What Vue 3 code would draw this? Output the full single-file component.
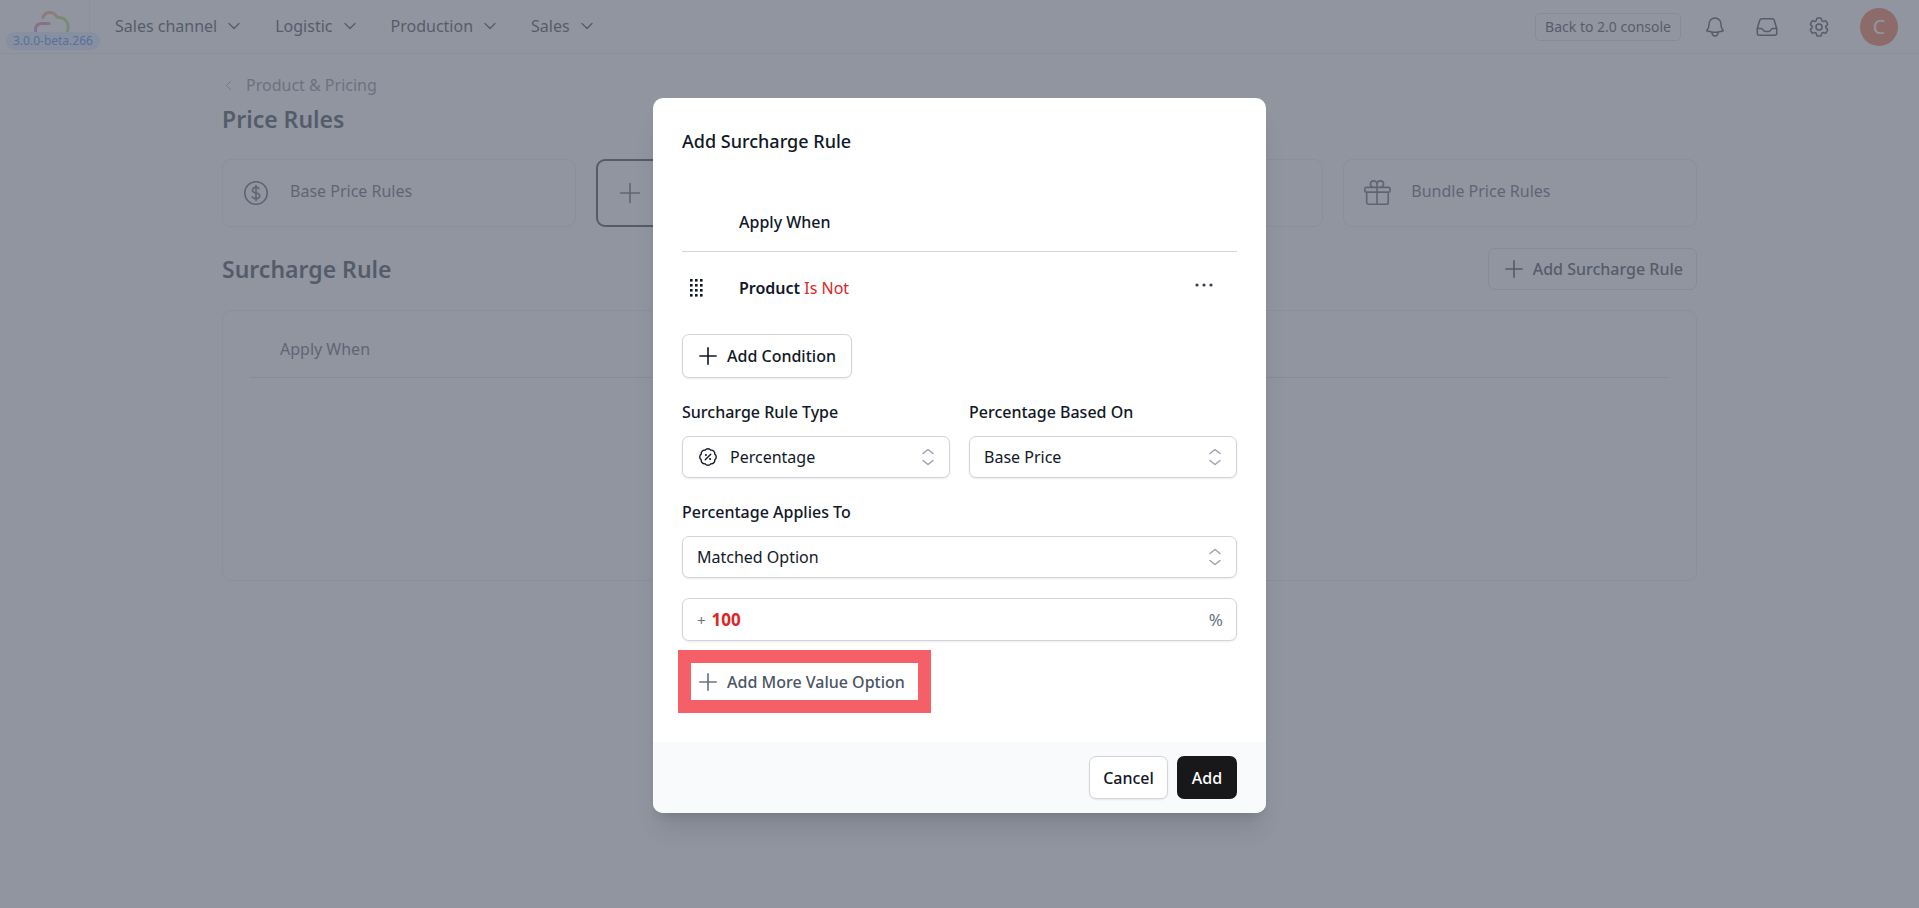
<script setup>
const navItems = ['Sales channel', 'Logistic', 'Production', 'Sales'];
</script>

<template>
  <div class="page">
    <header class="topbar">
      <div class="logo-box">
        <svg class="logo" viewBox="0 0 36 24" fill="none" stroke-width="3" stroke-linecap="round">
          <path d="M9 6.500 C10 2 15 0.500 19 2 C21 3 22 4 23 6" stroke="#f59a6a" />
          <path d="M24 6.500 C30 6 35 11 34 17 C34 20 33 22 32 23" stroke="#a8d84e" />
          <path d="M15 12.500 H8 C3 12.500 1 16 1.500 20" stroke="#e868a8" />
          <path d="M1.500 20 C2 22 3 23 4 23" stroke="#9a80e0" />
        </svg>
        <span class="version">3.0.0-beta.266</span>
      </div>
      <nav class="nav">
        <span v-for="item in navItems" :key="item" class="nav-item">
          {{ item }}
          <svg class="chev" viewBox="0 0 24 24" fill="none" stroke="currentColor" stroke-width="2">
            <path stroke-linecap="round" stroke-linejoin="round" d="m19.5 8.25-7.5 7.5-7.5-7.5" />
          </svg>
        </span>
      </nav>
      <div class="top-right">
        <span class="back-btn">Back to 2.0 console</span>
        <svg class="top-icon" viewBox="0 0 24 24" fill="none" stroke="currentColor" stroke-width="1.5">
          <path stroke-linecap="round" stroke-linejoin="round" d="M14.857 17.082a23.848 23.848 0 0 0 5.454-1.31A8.967 8.967 0 0 1 18 9.75V9A6 6 0 0 0 6 9v.75a8.967 8.967 0 0 1-2.312 6.022c1.733.64 3.56 1.085 5.455 1.31m5.714 0a24.255 24.255 0 0 1-5.714 0m5.714 0a3 3 0 1 1-5.714 0" />
        </svg>
        <svg class="top-icon" viewBox="0 0 24 24" fill="none" stroke="currentColor" stroke-width="1.5">
          <path stroke-linecap="round" stroke-linejoin="round" d="M2.250 13.500h3.860a2.250 2.250 0 0 1 2.012 1.244l.256.512a2.250 2.250 0 0 0 2.013 1.244h3.218a2.250 2.250 0 0 0 2.013-1.244l.256-.512a2.250 2.250 0 0 1 2.013-1.244h3.859m-19.500.338V18a2.250 2.250 0 0 0 2.250 2.250h15A2.250 2.250 0 0 0 21.750 18v-4.162c0-.224-.034-.447-.1-.661L19.240 5.338a2.250 2.250 0 0 0-2.150-1.588H6.911a2.250 2.250 0 0 0-2.150 1.588L2.350 13.177a2.250 2.250 0 0 0-.1.661Z" />
        </svg>
        <svg class="top-icon gear" viewBox="0 0 24 24" fill="none" stroke="currentColor" stroke-width="1.5">
          <path stroke-linecap="round" stroke-linejoin="round" d="M9.594 3.940c.09-.542.56-.94 1.110-.94h2.593c.55 0 1.020.398 1.110.94l.213 1.281c.063.374.313.686.645.87.074.04.147.083.22.127.325.196.72.257 1.075.124l1.217-.456a1.125 1.125 0 0 1 1.370.49l1.296 2.247a1.125 1.125 0 0 1-.26 1.431l-1.003.827c-.293.241-.438.613-.43.992a7.723 7.723 0 0 1 0 .255c-.008.378.137.75.43.991l1.004.827c.424.35.534.955.26 1.430l-1.298 2.247a1.125 1.125 0 0 1-1.369.491l-1.217-.456c-.355-.133-.75-.072-1.076.124a6.470 6.470 0 0 1-.22.128c-.331.183-.581.495-.644.869l-.213 1.281c-.09.543-.56.94-1.110.94h-2.594c-.55 0-1.019-.398-1.110-.94l-.213-1.281c-.062-.374-.312-.686-.644-.87a6.520 6.520 0 0 1-.22-.127c-.325-.196-.72-.257-1.076-.124l-1.217.456a1.125 1.125 0 0 1-1.369-.49l-1.297-2.247a1.125 1.125 0 0 1 .26-1.431l1.004-.827c.292-.24.437-.613.43-.991a6.932 6.932 0 0 1 0-.255c.007-.38-.138-.751-.43-.992l-1.004-.827a1.125 1.125 0 0 1-.26-1.430l1.297-2.247a1.125 1.125 0 0 1 1.370-.491l1.216.456c.356.133.751.072 1.076-.124.072-.044.146-.086.22-.128.332-.183.582-.495.644-.869l.214-1.280Z" />
          <path stroke-linecap="round" stroke-linejoin="round" d="M15 12a3 3 0 1 1-6 0 3 3 0 0 1 6 0Z" />
        </svg>
        <span class="avatar">C</span>
      </div>
    </header>

    <main class="content">
      <div class="crumb">
        <svg class="crumb-chev" viewBox="0 0 24 24" fill="none" stroke="currentColor" stroke-width="1.5">
          <path stroke-linecap="round" stroke-linejoin="round" d="M15.750 19.500 8.250 12l7.500-7.500" />
        </svg>
        Product &amp; Pricing
      </div>
      <h1 class="page-title">Price Rules</h1>

      <div class="rule-cards">
        <div class="rule-card">
          <svg class="card-icon" viewBox="0 0 24 24" fill="none" stroke="currentColor" stroke-width="1.3">
            <path stroke-linecap="round" stroke-linejoin="round" d="M12 6v12m-3-2.818.879.659c1.171.879 3.070.879 4.242 0 1.172-.879 1.172-2.303 0-3.182C13.536 12.219 12.768 12 12 12c-.725 0-1.450-.22-2.003-.659-1.106-.879-1.106-2.303 0-3.182s2.900-.879 4.006 0l.415.33M21 12a9 9 0 1 1-18 0 9 9 0 0 1 18 0Z" />
          </svg>
          <span class="card-label">Base Price Rules</span>
        </div>
        <div class="rule-card active">
          <svg class="card-icon" viewBox="0 0 24 24" fill="none" stroke="currentColor" stroke-width="1.300">
            <path stroke-linecap="round" stroke-linejoin="round" d="M12 4.500v15m7.500-7.500h-15" />
          </svg>
        </div>
        <div class="rule-card"></div>
        <div class="rule-card">
          <svg class="card-icon" viewBox="0 0 24 24" fill="none" stroke="currentColor" stroke-width="1.300">
            <path stroke-linecap="round" stroke-linejoin="round" d="M21 11.250v8.250a1.500 1.500 0 0 1-1.500 1.500H5.250a1.500 1.500 0 0 1-1.500-1.500v-8.250M12 4.875A2.625 2.625 0 1 0 9.375 7.500H12m0-2.625V7.500m0-2.625A2.625 2.625 0 1 1 14.625 7.500H12m0 0V21m-8.625-9.750h18c.621 0 1.125-.504 1.125-1.125v-1.500c0-.621-.504-1.125-1.125-1.125h-18c-.621 0-1.125.504-1.125 1.125v1.500c0 .621.504 1.125 1.125 1.125Z" />
          </svg>
          <span class="card-label">Bundle Price Rules</span>
        </div>
      </div>

      <div class="section-head">
        <h2 class="section-title">Surcharge Rule</h2>
        <span class="section-btn">
          <svg class="plus" viewBox="0 0 24 24" fill="none" stroke="currentColor" stroke-width="1.500">
            <path stroke-linecap="round" stroke-linejoin="round" d="M12 4.500v15m7.500-7.500h-15" />
          </svg>
          Add Surcharge Rule
        </span>
      </div>

      <div class="table-card">
        <div class="table-head">Apply When</div>
      </div>
    </main>

    <div class="overlay">
      <div class="modal">
        <div class="modal-body">
          <h3 class="modal-title">Add Surcharge Rule</h3>
          <div class="cond-head">Apply When</div>
          <div class="cond-row">
            <svg class="drag" viewBox="0 0 13 18" fill="#111827">
              <rect v-for="n in 12" :key="n" :x="((n - 1) % 3) * 5" :y="Math.floor((n - 1) / 3) * 5" width="2.600" height="2.600" />
            </svg>
            <span class="cond-text"><b>Product</b> <span class="red">Is Not</span></span>
            <svg class="dots" viewBox="0 0 20 6" fill="#374151">
              <circle cx="3" cy="3" r="1.600" />
              <circle cx="10" cy="3" r="1.600" />
              <circle cx="17" cy="3" r="1.600" />
            </svg>
          </div>
          <button class="btn add-cond">
            <svg class="plus" viewBox="0 0 24 24" fill="none" stroke="#111827" stroke-width="1.500">
              <path stroke-linecap="round" stroke-linejoin="round" d="M12 4.500v15m7.500-7.500h-15" />
            </svg>
            Add Condition
          </button>

          <div class="field-grid">
            <div>
              <div class="label">Surcharge Rule Type</div>
              <div class="select">
                <svg class="pct" viewBox="0 0 24 24" fill="none" stroke="#111827" stroke-width="1.500">
                  <path stroke-linecap="round" stroke-linejoin="round" d="m8.990 14.993 6-6m6 3.001c0 1.268-.63 2.390-1.593 3.069a3.746 3.746 0 0 1-1.043 3.296 3.745 3.745 0 0 1-3.296 1.043 3.745 3.745 0 0 1-3.068 1.593c-1.268 0-2.390-.63-3.068-1.593a3.745 3.745 0 0 1-3.296-1.043 3.746 3.746 0 0 1-1.043-3.297 3.746 3.746 0 0 1-1.593-3.068c0-1.268.63-2.390 1.593-3.068a3.746 3.746 0 0 1 1.043-3.297 3.745 3.745 0 0 1 3.296-1.042 3.745 3.745 0 0 1 3.068-1.594c1.268 0 2.390.63 3.068 1.593a3.745 3.745 0 0 1 3.296 1.043 3.746 3.746 0 0 1 1.043 3.297 3.746 3.746 0 0 1 1.593 3.068ZM9.740 9.743h.008v.007H9.740v-.007Zm.375 0a.375.375 0 1 1-.75 0 .375.375 0 0 1 .75 0Zm4.125 4.500h.008v.008h-.008v-.008Zm.375 0a.375.375 0 1 1-.75 0 .375.375 0 0 1 .75 0Z" />
                </svg>
                <span>Percentage</span>
                <svg class="updown" viewBox="0 0 20 20" fill="none" stroke="#9ca3af" stroke-width="1.500">
                  <path stroke-linecap="round" stroke-linejoin="round" d="M5 6.500 10 2.500l5 4M5 13.500l5 4 5-4" />
                </svg>
              </div>
            </div>
            <div>
              <div class="label">Percentage Based On</div>
              <div class="select">
                <span>Base Price</span>
                <svg class="updown" viewBox="0 0 20 20" fill="none" stroke="#9ca3af" stroke-width="1.500">
                  <path stroke-linecap="round" stroke-linejoin="round" d="M5 6.500 10 2.500l5 4M5 13.500l5 4 5-4" />
                </svg>
              </div>
            </div>
          </div>

          <div class="label applies">Percentage Applies To</div>
          <div class="select">
            <span>Matched Option</span>
            <svg class="updown" viewBox="0 0 20 20" fill="none" stroke="#9ca3af" stroke-width="1.500">
              <path stroke-linecap="round" stroke-linejoin="round" d="M5 6.500 10 2.500l5 4M5 13.500l5 4 5-4" />
            </svg>
          </div>

          <div class="select value-input">
            <span class="sign">+</span>
            <span class="amount">100</span>
            <span class="unit">%</span>
          </div>

          <button class="add-more">
            <svg class="plus" viewBox="0 0 24 24" fill="none" stroke="#6b7280" stroke-width="1.500">
              <path stroke-linecap="round" stroke-linejoin="round" d="M12 4.500v15m7.500-7.500h-15" />
            </svg>
            Add More Value Option
          </button>
        </div>
        <div class="modal-foot">
          <button class="btn cancel">Cancel</button>
          <button class="btn primary">Add</button>
        </div>
      </div>
    </div>
  </div>
</template>

<style>
html,
body {
  margin: 0;
  background: #fff;
}
</style>

<style scoped>
.page {
  position: relative;
  height: 908px;
  overflow: hidden;
  font-family: "Noto Sans", "Open Sans", sans-serif;
  color: #111827;
  background: #fff;
}

.topbar {
  display: flex;
  align-items: center;
  height: 53px;
  border-bottom: 1px solid #e5e7eb;
}

.logo-box {
  position: relative;
  flex: none;
  width: 90px;
  height: 53px;
  border-right: 1px solid #e5e7eb;
  box-sizing: border-box;
}

.logo {
  position: absolute;
  left: 34px;
  top: 11px;
  width: 36px;
  height: 24px;
}

.version {
  position: absolute;
  left: 6px;
  top: 32px;
  height: 18px;
  line-height: 18px;
  padding: 0 7px;
  border-radius: 9px;
  background: #dbeafe;
  color: #2563eb;
  font-size: 12px;
  white-space: nowrap;
}

.nav {
  display: flex;
  gap: 33px;
  margin-left: 25px;
  margin-top: -1px;
}

.nav-item {
  display: flex;
  align-items: center;
  gap: 9px;
  font-size: 16px;
  color: #111827;
}

.chev {
  width: 16px;
  height: 16px;
}

.top-right {
  display: flex;
  align-items: center;
  margin-left: auto;
  padding-right: 21px;
  color: #111827;
}

.back-btn {
  height: 28px;
  line-height: 26px;
  padding: 0 9px;
  box-sizing: border-box;
  border: 1px solid #d1d5db;
  border-radius: 5px;
  font-size: 14px;
  margin-right: 22px;
}

.top-icon {
  width: 24px;
  height: 24px;
  margin-right: 28px;
}

.top-icon.gear {
  margin-right: 29px;
}

.avatar {
  width: 38px;
  height: 38px;
  border-radius: 50%;
  background: #f4592a;
  color: #fff;
  display: flex;
  align-items: center;
  justify-content: center;
  font-size: 20px;
}

.content {
  width: 1475px;
  margin-left: 222px;
}

.crumb {
  display: flex;
  align-items: center;
  gap: 11px;
  height: 20px;
  margin-top: 21px;
  font-size: 16px;
  color: #6b7280;
}

.crumb-chev {
  width: 13px;
  height: 13px;
}

.page-title {
  margin: 9px 0 0;
  font-size: 23px;
  line-height: 30px;
  font-weight: 600;
}

.rule-cards {
  display: grid;
  grid-template-columns: repeat(4, 1fr);
  gap: 20px;
  margin-top: 25px;
}

.rule-card {
  display: flex;
  align-items: center;
  gap: 19px;
  height: 68px;
  box-sizing: border-box;
  padding: 0 18px;
  border: 1px solid #e5e7eb;
  border-radius: 9px;
  font-size: 16px;
  color: #374151;
}

.rule-card.active {
  border: 2px solid #111827;
  padding: 0 17px;
}

.card-icon {
  width: 30px;
  height: 30px;
  flex: none;
}

.card-label {
  margin-top: -4px;
}

.section-head {
  display: flex;
  align-items: center;
  justify-content: space-between;
  margin-top: 21px;
}

.section-title {
  margin: 0;
  font-size: 23px;
  font-weight: 600;
}

.section-btn {
  display: flex;
  align-items: center;
  gap: 6px;
  height: 42px;
  padding: 0 13px 0 12px;
  box-sizing: border-box;
  border: 1px solid #d1d5db;
  border-radius: 7px;
  font-size: 16px;
  font-weight: 500;
  color: #111827;
}

.plus {
  width: 26px;
  height: 26px;
  flex: none;
}

.table-card {
  height: 271px;
  margin-top: 20px;
  box-sizing: border-box;
  padding: 0 27px;
  border: 1px solid #e5e7eb;
  border-radius: 9px;
}

.table-head {
  height: 66px;
  line-height: 76px;
  padding-left: 30px;
  font-size: 16px;
  border-bottom: 1px solid #d1d5db;
  color: #374151;
}

.overlay {
  position: absolute;
  inset: 0;
  background: rgba(107, 114, 128, 0.75);
}

.modal {
  position: absolute;
  left: 653px;
  top: 98px;
  width: 613px;
  height: 715px;
  display: flex;
  flex-direction: column;
  background: #fff;
  border-radius: 10px;
  overflow: hidden;
  box-shadow: 0 20px 25px -5px rgba(0, 0, 0, 0.1), 0 8px 10px -6px rgba(0, 0, 0, 0.1);
}

.modal-body {
  flex: 1;
  padding: 29px 29px 0;
}

.modal-title {
  margin: 0;
  font-size: 18px;
  line-height: 28px;
  font-weight: 500;
}

.cond-head {
  margin-top: 46px;
  height: 51px;
  padding: 8px 0 0 57px;
  box-sizing: border-box;
  line-height: 26px;
  font-size: 16px;
  font-weight: 500;
  border-bottom: 1px solid #d1d5db;
}

.cond-row {
  display: flex;
  align-items: center;
  height: 71px;
  padding-left: 8px;
  font-size: 16px;
}

.drag {
  width: 13px;
  height: 18px;
  flex: none;
}

.cond-text {
  margin-left: 36px;
}

.cond-text b {
  font-weight: 600;
}

.red {
  color: #dc2626;
}

.dots {
  width: 20px;
  height: 6px;
  margin-left: auto;
  margin-right: 23px;
  margin-top: -6px;
}

.btn {
  font-family: inherit;
  font-size: 16px;
  font-weight: 500;
  border-radius: 7px;
  cursor: pointer;
}

.add-cond {
  display: flex;
  align-items: center;
  gap: 6px;
  width: 170px;
  height: 44px;
  margin-top: 11px;
  padding: 0 12px;
  box-sizing: border-box;
  background: #fff;
  color: #111827;
  border: 1px solid #d1d5db;
  box-shadow: 0 1px 2px rgba(0, 0, 0, 0.08);
}

.field-grid {
  display: grid;
  grid-template-columns: 268px 268px;
  gap: 19px;
  margin-top: 23px;
}

.label {
  font-size: 16px;
  line-height: 22px;
  font-weight: 500;
  margin-bottom: 13px;
}

.applies {
  margin-top: 23px;
}

.select {
  display: flex;
  align-items: center;
  height: 42px;
  box-sizing: border-box;
  padding: 0 14px;
  background: #fff;
  border: 1px solid #d1d5db;
  border-radius: 7px;
  box-shadow: 0 1px 2px rgba(0, 0, 0, 0.08);
  font-size: 16px;
}

.pct {
  width: 22px;
  height: 22px;
  flex: none;
  margin-right: 11px;
}

.updown {
  width: 20px;
  height: 20px;
  margin-left: auto;
  margin-right: -3px;
}

.value-input {
  margin-top: 20px;
  height: 43px;
}

.sign {
  color: #6b7280;
  font-size: 15px;
  margin-right: 6px;
}

.amount {
  color: #dc2626;
  font-size: 17px;
  font-weight: 700;
}

.unit {
  margin-left: auto;
  color: #6b7280;
  font-size: 17px;
  margin-right: -1px;
}

.add-more {
  display: flex;
  align-items: center;
  gap: 6px;
  width: 227px;
  height: 37px;
  margin-top: 22px;
  margin-left: 9px;
  padding: 0 4px;
  box-sizing: border-box;
  background: #fff;
  border: 0;
  outline: 13px solid #f56068;
  font-family: inherit;
  font-size: 16px;
  font-weight: 500;
  color: #4b5563;
}

.modal-foot {
  display: flex;
  justify-content: flex-end;
  gap: 9px;
  height: 71px;
  box-sizing: border-box;
  padding: 14px 29px;
  background: #f9fafb;
}

.cancel {
  width: 79px;
  height: 43px;
  background: #fff;
  border: 1px solid #d1d5db;
  color: #111827;
  box-shadow: 0 1px 2px rgba(0, 0, 0, 0.08);
}

.primary {
  width: 60px;
  height: 43px;
  background: #18181b;
  border: 0;
  color: #fff;
}
</style>
